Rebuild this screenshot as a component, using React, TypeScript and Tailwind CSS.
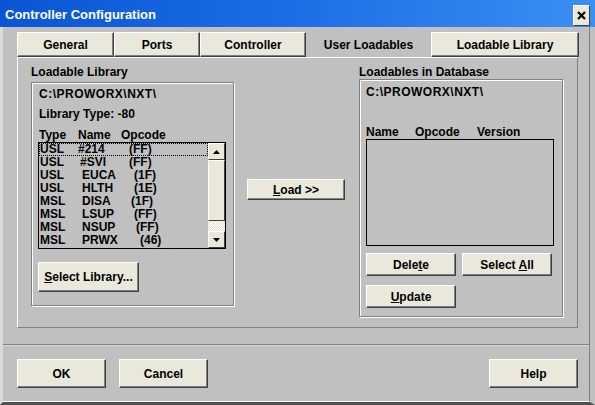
import React from "react";

const FONT = "font-['Liberation_Sans',Arial,sans-serif]";

function Btn({
  children,
  className = "",
}: {
  children: React.ReactNode;
  className?: string;
}) {
  return (
    <div
      className={
        "flex items-center justify-center bg-[#e9e8da] border border-t-white border-l-white border-r-[#404040] border-b-[#404040] shadow-[inset_-1px_-1px_0_#808080] text-[12px] font-bold text-black leading-none " +
        className
      }
    >
      {children}
    </div>
  );
}

function Tri({ up }: { up?: boolean }) {
  return (
    <svg width="7" height="4" viewBox="0 0 7 4">
      {up ? <polygon points="3.5,0 7,4 0,4" fill="#000" /> : <polygon points="0,0 7,0 3.5,4" fill="#000" />}
    </svg>
  );
}

const rows = [
  { t: "USL", tw: "w-[38px]", n: "#214", nw: "w-[51px]", o: "(FF)" },
  { t: "USL", tw: "w-[40px]", n: "#SVI", nw: "w-[49px]", o: "(FF)" },
  { t: "USL", tw: "w-[42px]", n: "EUCA", nw: "w-[52px]", o: "(1F)" },
  { t: "USL", tw: "w-[42px]", n: "HLTH", nw: "w-[52px]", o: "(1E)" },
  { t: "MSL", tw: "w-[42px]", n: "DISA", nw: "w-[49px]", o: "(1F)" },
  { t: "MSL", tw: "w-[42px]", n: "LSUP", nw: "w-[52px]", o: "(FF)" },
  { t: "MSL", tw: "w-[42px]", n: "NSUP", nw: "w-[54px]", o: "(FF)" },
  { t: "MSL", tw: "w-[42px]", n: "PRWX", nw: "w-[58px]", o: "(46)" },
];

function GroupBox({
  className,
  children,
}: {
  className: string;
  children: React.ReactNode;
}) {
  return (
    <div
      className={
        "border border-[#808080] shadow-[1px_1px_0_#fff,inset_1px_1px_0_#fff] " +
        className
      }
    >
      {children}
    </div>
  );
}

export default function App() {
  return (
    <div
      className={
        "w-[595px] h-[405px] bg-[#c0c0c0] flex flex-col overflow-hidden text-black " +
        FONT
      }
    >
      {/* title bar */}
      <div className="h-[27px] shrink-0 flex items-center pl-[5px] pr-[5px] bg-gradient-to-r from-[#0a55d4] via-[#1c6ee6] to-[#3b8ff2]">
        <span className="text-white text-[13px] font-bold flex-1 pt-[3px]">
          Controller Configuration
        </span>
        <div className="w-[17px] h-[21px] mt-[3px] bg-[#e9e8da] border border-t-white border-l-white border-r-[#404040] border-b-[#404040] flex items-center justify-center">
          <svg width="9" height="9" viewBox="0 0 9 9">
            <path d="M1 1 L8 8 M8 1 L1 8" stroke="#000" strokeWidth="2.2" />
          </svg>
        </div>
      </div>

      {/* dialog body */}
      <div className="flex-1 flex flex-col border-l-[3px] border-l-[#dadada] border-r-[5px] border-r-[#c0c0c0] border-b-[3px] border-b-[#505050]">
        <div className="flex-1 flex flex-col border-r border-r-[#808080] border-b border-b-white">
          {/* tabs */}
          <div className="mt-[5px] ml-[14px] flex h-[25px] text-[12px] font-bold">
            <Btn className="w-[97px] h-[25px]">General</Btn>
            <Btn className="w-[86px] h-[25px]">Ports</Btn>
            <Btn className="w-[106px] h-[25px]">Controller</Btn>
            <div className="w-[125px] h-[25px] flex items-center justify-center">
              User Loadables
            </div>
            <Btn className="w-[148px] h-[25px]">Loadable Library</Btn>
          </div>

          {/* tab page */}
          <div className="ml-[14px] w-[561px] h-[271px] border border-t-white border-l-white border-r-[#808080] border-b-[#808080] flex text-[12px] font-bold">
            {/* left column */}
            <div className="ml-[13px] mt-[7px] flex flex-col">
              <div className="h-[14px] leading-[14px] mb-[3px]">Loadable Library</div>
              <GroupBox className="w-[203px] h-[224px] flex flex-col pl-[6px] pt-[4px]">
                <div className="h-[14px] leading-[14px] pl-[1px] tracking-[0.5px]">
                  C:\PROWORX\NXT\
                </div>
                <div className="h-[14px] leading-[14px] mt-[6px] pl-[1px]">
                  Library Type: -80
                </div>
                <div className="h-[14px] leading-[14px] mt-[7px] pl-[1px] flex">
                  <span className="w-[39px]">Type</span>
                  <span className="w-[43px]">Name</span>
                  <span>Opcode</span>
                </div>
                <div className="w-[188px] h-[107px] border border-black flex">
                  <div className="flex-1 flex flex-col">
                    {rows.map((r, i) => (
                      <div
                        key={i}
                        className={
                          "h-[13px] leading-[13px] flex pl-[1px] " +
                          (i === 0 ? "outline outline-1 outline-dotted outline-black -outline-offset-1" : "")
                        }
                      >
                        <span className={r.tw}>{r.t}</span>
                        <span className={r.nw}>{r.n}</span>
                        <span>{r.o}</span>
                      </div>
                    ))}
                  </div>
                  <div className="w-[17px] flex flex-col">
                    <div className="h-[17px] bg-[#e9e8da] border border-t-white border-l-white border-r-[#404040] border-b-[#404040] flex items-center justify-center">
                      <Tri up />
                    </div>
                    <div className="h-[61px] bg-[#e9e8da] border border-t-white border-l-white border-r-[#404040] border-b-[#404040]" />
                    <div className="flex-1 bg-[repeating-conic-gradient(#ffffff_0%_25%,#e2e1d4_0%_50%)] bg-[length:2px_2px]" />
                    <div className="h-[17px] bg-[#e9e8da] border border-t-white border-l-white border-r-[#404040] border-b-[#404040] flex items-center justify-center">
                      <Tri />
                    </div>
                  </div>
                </div>
                <Btn className="w-[101px] h-[30px] mt-[13px]">
                  <span>
                    <u>S</u>elect Library...
                  </span>
                </Btn>
              </GroupBox>
            </div>

            {/* middle */}
            <div className="ml-[13px] mt-[121px]">
              <Btn className="w-[98px] h-[21px]">
                <span>
                  <u>L</u>oad &gt;&gt;
                </span>
              </Btn>
            </div>

            {/* right column */}
            <div className="ml-[14px] mt-[7px] flex flex-col">
              <div className="h-[14px] leading-[14px]">Loadables in Database</div>
              <GroupBox className="w-[204px] h-[238px] flex flex-col pl-[6px] pt-[5px]">
                <div className="h-[14px] leading-[14px] tracking-[0.5px]">
                  C:\PROWORX\NXT\
                </div>
                <div className="h-[14px] leading-[14px] mt-[26px] flex">
                  <span className="w-[49px]">Name</span>
                  <span className="w-[62px]">Opcode</span>
                  <span>Version</span>
                </div>
                <div className="w-[188px] h-[107px] border border-black" />
                <div className="mt-[7px] flex gap-[6px]">
                  <Btn className="w-[90px] h-[23px]">
                    <span>
                      Dele<u>t</u>e
                    </span>
                  </Btn>
                  <Btn className="w-[90px] h-[23px]">
                    <span>
                      Select <u>A</u>ll
                    </span>
                  </Btn>
                </div>
                <Btn className="w-[90px] h-[23px] mt-[9px]">
                  <span>
                    <u>U</u>pdate
                  </span>
                </Btn>
              </GroupBox>
            </div>
          </div>

          {/* separator */}
          <div className="mt-[16px] h-[2px] border-t border-t-[#808080] border-b border-b-[#d8d8d8]" />

          {/* bottom buttons */}
          <div className="mt-[13px] ml-[14px] flex">
            <Btn className="w-[89px] h-[29px]">OK</Btn>
            <Btn className="w-[89px] h-[29px] ml-[13px]">Cancel</Btn>
            <div className="flex-1" />
            <Btn className="w-[89px] h-[29px] mr-[11px]">Help</Btn>
          </div>
        </div>
      </div>
    </div>
  );
}
